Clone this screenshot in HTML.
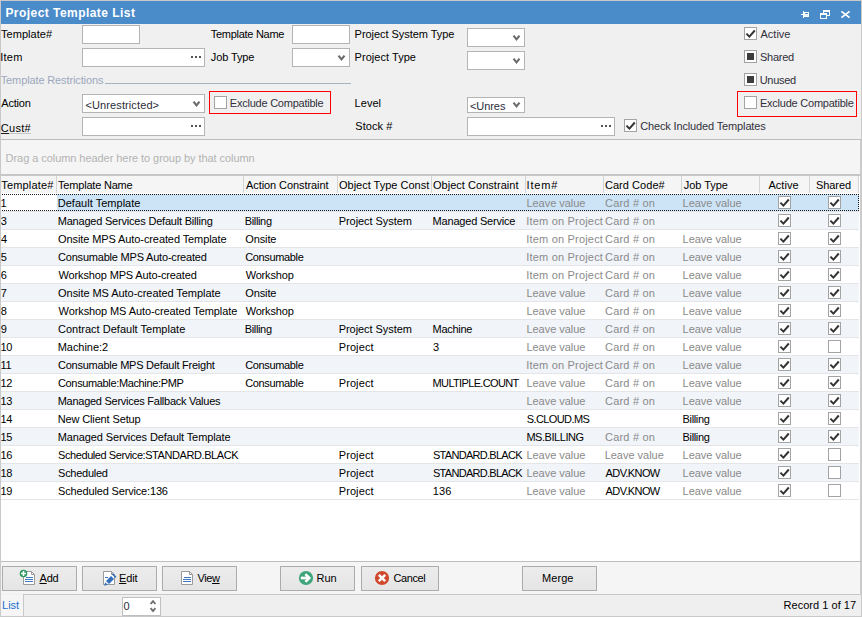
<!DOCTYPE html><html><head><meta charset="utf-8"><title>Project Template List</title><style>
html,body{margin:0;padding:0;}
body{width:862px;height:617px;position:relative;overflow:hidden;background:#f0f0f0;font-family:"Liberation Sans",sans-serif;}
.t{position:absolute;white-space:nowrap;font-family:"Liberation Sans",sans-serif;}
</style></head><body>

<div style="position:absolute;left:0px;top:0px;width:862px;height:1px;background:#c9c9c9"></div>
<div style="position:absolute;left:0px;top:0px;width:1px;height:617px;background:#c9c9c9"></div>
<div style="position:absolute;left:861px;top:0px;width:1px;height:617px;background:#c9c9c9"></div>
<div style="position:absolute;left:1px;top:1px;width:860px;height:23px;background:#4a8bca"></div>
<div class="t" style="left:5.40px;top:5.53px;color:#fff;font-size:12px;font-weight:bold;letter-spacing:0.453px;line-height:14px;">Project Template List</div>
<div style="position:absolute;left:801px;top:14px;width:2px;height:1px;background:#fff"></div>
<div style="position:absolute;left:803px;top:11px;width:1px;height:7px;background:#fff"></div>
<div style="position:absolute;left:804px;top:12px;width:5px;height:5px;background:#fff"></div>
<div style="position:absolute;left:805px;top:13px;width:3px;height:1px;background:#4a8bca"></div>
<div style="position:absolute;left:805px;top:15px;width:3px;height:1px;background:#dfeaf6"></div>
<div style="position:absolute;left:823px;top:10px;width:7px;height:6px;background:#fff"></div>
<div style="position:absolute;left:824px;top:12px;width:5px;height:3px;background:#4a8bca"></div>
<div style="position:absolute;left:820px;top:13px;width:7px;height:6px;background:#fff"></div>
<div style="position:absolute;left:821px;top:15px;width:5px;height:3px;background:#4a8bca"></div>
<svg style="position:absolute;left:839px;top:8px" width="14" height="14" viewBox="0 0 14 14" fill="none" stroke="#fff" stroke-width="1.8"><path d="M2.4 3.4 L10.6 9.6 M10.6 3.4 L2.4 9.6"/></svg>
<div class="t" style="left:1.06px;top:27.56px;color:#000000;font-size:11px;font-weight:normal;letter-spacing:0.030px;line-height:13px;">Template#</div>
<div class="t" style="left:0.29px;top:50.56px;color:#000000;font-size:11px;font-weight:normal;letter-spacing:0.214px;line-height:13px;">Item</div>
<div class="t" style="left:210.76px;top:27.86px;color:#000000;font-size:11px;font-weight:normal;letter-spacing:-0.276px;line-height:13px;">Template Name</div>
<div class="t" style="left:210.82px;top:50.86px;color:#000000;font-size:11px;font-weight:normal;letter-spacing:-0.111px;line-height:13px;">Job Type</div>
<div class="t" style="left:354.60px;top:27.86px;color:#000000;font-size:11px;font-weight:normal;letter-spacing:-0.044px;line-height:13px;">Project System Type</div>
<div class="t" style="left:354.60px;top:50.86px;color:#000000;font-size:11px;font-weight:normal;letter-spacing:0.041px;line-height:13px;">Project Type</div>
<div style="position:absolute;left:82px;top:25px;width:58px;height:19px;box-sizing:border-box;border:1px solid #b4b4b4;background:#fff"></div>
<div style="position:absolute;left:82px;top:48px;width:123px;height:19px;box-sizing:border-box;border:1px solid #b4b4b4;background:#fff"></div>
<div style="position:absolute;left:191px;top:56px;width:2px;height:2px;background:#555"></div>
<div style="position:absolute;left:195px;top:56px;width:2px;height:2px;background:#555"></div>
<div style="position:absolute;left:199px;top:56px;width:2px;height:2px;background:#555"></div>
<div style="position:absolute;left:292px;top:25px;width:58px;height:19px;box-sizing:border-box;border:1px solid #b4b4b4;background:#fff"></div>
<div style="position:absolute;left:292px;top:48px;width:58px;height:19px;box-sizing:border-box;border:1px solid #b4b4b4;background:#fff"></div>
<svg style="position:absolute;left:337px;top:54px" width="9" height="7" viewBox="0 0 9 7"><path d="M1.5 1.7 L4.5 5.3 L7.5 1.7" fill="none" stroke="#6a6a6a" stroke-width="2.1"/></svg>
<div style="position:absolute;left:467px;top:28px;width:58px;height:19px;box-sizing:border-box;border:1px solid #b4b4b4;background:#fff"></div>
<svg style="position:absolute;left:512px;top:34px" width="9" height="7" viewBox="0 0 9 7"><path d="M1.5 1.7 L4.5 5.3 L7.5 1.7" fill="none" stroke="#6a6a6a" stroke-width="2.1"/></svg>
<div style="position:absolute;left:467px;top:51px;width:58px;height:19px;box-sizing:border-box;border:1px solid #b4b4b4;background:#fff"></div>
<svg style="position:absolute;left:512px;top:57px" width="9" height="7" viewBox="0 0 9 7"><path d="M1.5 1.7 L4.5 5.3 L7.5 1.7" fill="none" stroke="#6a6a6a" stroke-width="2.1"/></svg>
<div class="t" style="left:0.76px;top:73.86px;color:#9ca8bd;font-size:11px;font-weight:normal;letter-spacing:-0.126px;line-height:13px;">Template Restrictions</div>
<div style="position:absolute;left:105px;top:83px;width:246px;height:1px;background:#a9b1ba"></div>
<div class="t" style="left:1.28px;top:96.86px;color:#000000;font-size:11px;font-weight:normal;letter-spacing:-0.186px;line-height:13px;">Action</div>
<div style="position:absolute;left:82px;top:94px;width:123px;height:19px;box-sizing:border-box;border:1px solid #b4b4b4;background:#fff"></div>
<svg style="position:absolute;left:192px;top:100px" width="9" height="7" viewBox="0 0 9 7"><path d="M1.5 1.7 L4.5 5.3 L7.5 1.7" fill="none" stroke="#6a6a6a" stroke-width="2.1"/></svg>
<div class="t" style="left:85.46px;top:98.66px;color:#2b2b3b;font-size:11px;font-weight:normal;letter-spacing:0.110px;line-height:13px;">&lt;Unrestricted&gt;</div>
<div class="t" style="left:0.74px;top:121.86px;color:#000000;font-size:11px;font-weight:normal;letter-spacing:0.296px;line-height:13px;">Cust#</div>
<div style="position:absolute;left:1px;top:133px;width:8px;height:1px;background:#1e1e1e"></div>
<div style="position:absolute;left:9px;top:133px;width:22px;height:1px;background:#c4c4c4"></div>
<div style="position:absolute;left:82px;top:117px;width:123px;height:19px;box-sizing:border-box;border:1px solid #b4b4b4;background:#fff"></div>
<div style="position:absolute;left:191px;top:125px;width:2px;height:2px;background:#555"></div>
<div style="position:absolute;left:195px;top:125px;width:2px;height:2px;background:#555"></div>
<div style="position:absolute;left:199px;top:125px;width:2px;height:2px;background:#555"></div>
<div style="position:absolute;left:209px;top:91px;width:122px;height:23px;box-sizing:border-box;border:1px solid #ff0000"></div>
<svg style="position:absolute;left:214px;top:96px" width="13" height="13" viewBox="0 0 13 13"><rect x="0.5" y="0.5" width="12" height="12" fill="#fff" stroke="#a3a3a3"/></svg>
<div class="t" style="left:229.80px;top:96.86px;color:#30303c;font-size:11px;font-weight:normal;letter-spacing:-0.232px;line-height:13px;">Exclude Compatible</div>
<div class="t" style="left:354.60px;top:96.86px;color:#000000;font-size:11px;font-weight:normal;letter-spacing:0.037px;line-height:13px;">Level</div>
<div class="t" style="left:355.29px;top:119.86px;color:#000000;font-size:11px;font-weight:normal;letter-spacing:0.063px;line-height:13px;">Stock #</div>
<div style="position:absolute;left:467px;top:97px;width:58px;height:16px;box-sizing:border-box;border:1px solid #b4b4b4;background:#fff"></div>
<svg style="position:absolute;left:512px;top:101px" width="9" height="7" viewBox="0 0 9 7"><path d="M1.5 1.7 L4.5 5.3 L7.5 1.7" fill="none" stroke="#6a6a6a" stroke-width="2.1"/></svg>
<div class="t" style="left:469.96px;top:99.66px;color:#2b2b3b;font-size:11px;font-weight:normal;letter-spacing:-0.065px;line-height:13px;">&lt;Unres</div>
<div style="position:absolute;left:467px;top:117px;width:148px;height:19px;box-sizing:border-box;border:1px solid #b4b4b4;background:#fff"></div>
<div style="position:absolute;left:601px;top:125px;width:2px;height:2px;background:#555"></div>
<div style="position:absolute;left:605px;top:125px;width:2px;height:2px;background:#555"></div>
<div style="position:absolute;left:609px;top:125px;width:2px;height:2px;background:#555"></div>
<svg style="position:absolute;left:624px;top:119px" width="13" height="13" viewBox="0 0 13 13"><rect x="0.5" y="0.5" width="12" height="12" fill="#fff" stroke="#a3a3a3"/><path d="M2.4 6.6 L5.4 9.6 L10.8 3.5" fill="none" stroke="#333" stroke-width="2"/></svg>
<div class="t" style="left:640.14px;top:119.86px;color:#30303c;font-size:11px;font-weight:normal;letter-spacing:-0.138px;line-height:13px;">Check Included Templates</div>
<svg style="position:absolute;left:744px;top:27px" width="13" height="13" viewBox="0 0 13 13"><rect x="0.5" y="0.5" width="12" height="12" fill="#fff" stroke="#a3a3a3"/><path d="M2.4 6.6 L5.4 9.6 L10.8 3.5" fill="none" stroke="#333" stroke-width="2"/></svg>
<div class="t" style="left:760.48px;top:27.86px;color:#30303c;font-size:11px;font-weight:normal;letter-spacing:0.011px;line-height:13px;">Active</div>
<svg style="position:absolute;left:744px;top:50px" width="13" height="13" viewBox="0 0 13 13"><rect x="0.5" y="0.5" width="12" height="12" fill="#fff" stroke="#a3a3a3"/><rect x="3" y="3" width="7" height="7" fill="#3c3c3c"/></svg>
<div class="t" style="left:759.99px;top:50.86px;color:#30303c;font-size:11px;font-weight:normal;letter-spacing:-0.251px;line-height:13px;">Shared</div>
<svg style="position:absolute;left:744px;top:73px" width="13" height="13" viewBox="0 0 13 13"><rect x="0.5" y="0.5" width="12" height="12" fill="#fff" stroke="#a3a3a3"/><rect x="3" y="3" width="7" height="7" fill="#3c3c3c"/></svg>
<div class="t" style="left:759.65px;top:73.86px;color:#30303c;font-size:11px;font-weight:normal;letter-spacing:-0.273px;line-height:13px;">Unused</div>
<div style="position:absolute;left:737px;top:91px;width:120px;height:26px;box-sizing:border-box;border:1px solid #ff0000"></div>
<svg style="position:absolute;left:744px;top:96px" width="13" height="13" viewBox="0 0 13 13"><rect x="0.5" y="0.5" width="12" height="12" fill="#fff" stroke="#a3a3a3"/></svg>
<div class="t" style="left:759.90px;top:96.86px;color:#30303c;font-size:11px;font-weight:normal;letter-spacing:-0.226px;line-height:13px;">Exclude Compatible</div>
<div style="position:absolute;left:1px;top:139px;width:860px;height:1px;background:#bcbcbc"></div>
<div style="position:absolute;left:1px;top:140px;width:859px;height:34px;background:#f5f5f5"></div>
<div class="t" style="left:5.60px;top:152.36px;color:#b3b3b3;font-size:11px;font-weight:normal;letter-spacing:-0.058px;line-height:13px;">Drag a column header here to group by that column</div>
<div style="position:absolute;left:1px;top:174px;width:859px;height:2px;background:#c6c6c6"></div>
<div style="position:absolute;left:1px;top:176px;width:859px;height:385px;background:#fff"></div>
<div style="position:absolute;left:860px;top:140px;width:1px;height:454px;background:#cdcdcd"></div>
<div style="position:absolute;left:1px;top:176px;width:858px;height:17px;background:#f5f5f5"></div>
<div style="position:absolute;left:56px;top:176px;width:1px;height:17px;background:#d4d4d4"></div>
<div style="position:absolute;left:243px;top:176px;width:1px;height:17px;background:#d4d4d4"></div>
<div style="position:absolute;left:337px;top:176px;width:1px;height:17px;background:#d4d4d4"></div>
<div style="position:absolute;left:431px;top:176px;width:1px;height:17px;background:#d4d4d4"></div>
<div style="position:absolute;left:525px;top:176px;width:1px;height:17px;background:#d4d4d4"></div>
<div style="position:absolute;left:603px;top:176px;width:1px;height:17px;background:#d4d4d4"></div>
<div style="position:absolute;left:681px;top:176px;width:1px;height:17px;background:#d4d4d4"></div>
<div style="position:absolute;left:759px;top:176px;width:1px;height:17px;background:#d4d4d4"></div>
<div style="position:absolute;left:809px;top:176px;width:1px;height:17px;background:#d4d4d4"></div>
<div style="position:absolute;left:858px;top:176px;width:1px;height:17px;background:#d4d4d4"></div>
<div style="position:absolute;left:1px;top:175px;width:55px;height:18px;overflow:hidden"><div class="t" style="left:0.26px;top:4.36px;color:#000000;font-size:11px;letter-spacing:0.168px;line-height:13px">Template#</div></div>
<div style="position:absolute;left:57px;top:175px;width:186px;height:18px;overflow:hidden"><div class="t" style="left:1.06px;top:4.36px;color:#000000;font-size:11px;letter-spacing:-0.201px;line-height:13px">Template Name</div></div>
<div style="position:absolute;left:244px;top:175px;width:93px;height:18px;overflow:hidden"><div class="t" style="left:1.98px;top:4.36px;color:#000000;font-size:11px;letter-spacing:-0.073px;line-height:13px">Action Constraint</div></div>
<div style="position:absolute;left:338px;top:175px;width:93px;height:18px;overflow:hidden"><div class="t" style="left:0.98px;top:4.36px;color:#000000;font-size:11px;letter-spacing:0.000px;line-height:13px">Object Type Const</div></div>
<div style="position:absolute;left:432px;top:175px;width:93px;height:18px;overflow:hidden"><div class="t" style="left:0.98px;top:4.36px;color:#000000;font-size:11px;letter-spacing:0.032px;line-height:13px">Object Constraint</div></div>
<div style="position:absolute;left:526px;top:175px;width:77px;height:18px;overflow:hidden"><div class="t" style="left:0.49px;top:4.36px;color:#000000;font-size:11px;letter-spacing:0.864px;line-height:13px">Item#</div></div>
<div style="position:absolute;left:604px;top:175px;width:77px;height:18px;overflow:hidden"><div class="t" style="left:0.94px;top:4.36px;color:#000000;font-size:11px;letter-spacing:0.045px;line-height:13px">Card Code#</div></div>
<div style="position:absolute;left:682px;top:175px;width:77px;height:18px;overflow:hidden"><div class="t" style="left:1.82px;top:4.36px;color:#000000;font-size:11px;letter-spacing:-0.040px;line-height:13px">Job Type</div></div>
<div class="t" style="left:768.48px;top:179.36px;color:#000000;font-size:11px;font-weight:normal;letter-spacing:0.031px;line-height:13px;">Active</div>
<div class="t" style="left:815.99px;top:179.36px;color:#000000;font-size:11px;font-weight:normal;letter-spacing:-0.071px;line-height:13px;">Shared</div>
<div style="position:absolute;left:1px;top:193px;width:858px;height:18px;background:#fff"></div>
<div style="position:absolute;left:57px;top:194px;width:802px;height:17px;background:#cde4f7"></div>
<div style="position:absolute;left:1px;top:211px;width:858px;height:1px;background:#e3e5e9"></div>
<div style="position:absolute;left:1px;top:194px;width:55px;height:17px;overflow:hidden"><div class="t" style="left:-0.64px;top:3.46px;color:#000000;font-size:11px;letter-spacing:-0.150px;line-height:13px">1</div></div>
<div style="position:absolute;left:57px;top:194px;width:186px;height:17px;overflow:hidden"><div class="t" style="left:0.70px;top:3.46px;color:#000000;font-size:11px;letter-spacing:0.029px;line-height:13px">Default Template</div></div>
<div style="position:absolute;left:526px;top:194px;width:77px;height:17px;overflow:hidden"><div class="t" style="left:0.40px;top:3.46px;color:#8a8a8a;font-size:11px;letter-spacing:-0.024px;line-height:13px">Leave value</div></div>
<div style="position:absolute;left:604px;top:194px;width:77px;height:17px;overflow:hidden"><div class="t" style="left:1.04px;top:3.46px;color:#8a8a8a;font-size:11px;letter-spacing:0.197px;line-height:13px">Card # on</div></div>
<div style="position:absolute;left:682px;top:194px;width:77px;height:17px;overflow:hidden"><div class="t" style="left:0.60px;top:3.46px;color:#8a8a8a;font-size:11px;letter-spacing:-0.024px;line-height:13px">Leave value</div></div>
<svg style="position:absolute;left:778px;top:196px" width="13" height="13" viewBox="0 0 13 13"><rect x="0.5" y="0.5" width="12" height="12" fill="#fff" stroke="#a3a3a3"/><path d="M2.4 6.6 L5.4 9.6 L10.8 3.5" fill="none" stroke="#333" stroke-width="2"/></svg>
<svg style="position:absolute;left:828px;top:196px" width="13" height="13" viewBox="0 0 13 13"><rect x="0.5" y="0.5" width="12" height="12" fill="#fff" stroke="#a3a3a3"/><path d="M2.4 6.6 L5.4 9.6 L10.8 3.5" fill="none" stroke="#333" stroke-width="2"/></svg>
<div style="position:absolute;left:1px;top:212px;width:858px;height:17px;background:#f1f4f9"></div>
<div style="position:absolute;left:1px;top:229px;width:858px;height:1px;background:#e3e5e9"></div>
<div style="position:absolute;left:1px;top:212px;width:55px;height:17px;overflow:hidden"><div class="t" style="left:-0.22px;top:3.46px;color:#000000;font-size:11px;letter-spacing:-0.150px;line-height:13px">3</div></div>
<div style="position:absolute;left:57px;top:212px;width:186px;height:17px;overflow:hidden"><div class="t" style="left:0.70px;top:3.46px;color:#000000;font-size:11px;letter-spacing:-0.203px;line-height:13px">Managed Services Default Billing</div></div>
<div style="position:absolute;left:244px;top:212px;width:93px;height:17px;overflow:hidden"><div class="t" style="left:0.80px;top:3.46px;color:#000000;font-size:11px;letter-spacing:-0.357px;line-height:13px">Billing</div></div>
<div style="position:absolute;left:338px;top:212px;width:93px;height:17px;overflow:hidden"><div class="t" style="left:0.70px;top:3.46px;color:#000000;font-size:11px;letter-spacing:-0.057px;line-height:13px">Project System</div></div>
<div style="position:absolute;left:432px;top:212px;width:93px;height:17px;overflow:hidden"><div class="t" style="left:0.60px;top:3.46px;color:#000000;font-size:11px;letter-spacing:-0.194px;line-height:13px">Managed Service</div></div>
<div style="position:absolute;left:526px;top:212px;width:77px;height:17px;overflow:hidden"><div class="t" style="left:0.29px;top:3.46px;color:#8a8a8a;font-size:11px;letter-spacing:0.187px;line-height:13px">Item on Project</div></div>
<div style="position:absolute;left:604px;top:212px;width:77px;height:17px;overflow:hidden"><div class="t" style="left:1.04px;top:3.46px;color:#8a8a8a;font-size:11px;letter-spacing:0.197px;line-height:13px">Card # on</div></div>
<svg style="position:absolute;left:778px;top:214px" width="13" height="13" viewBox="0 0 13 13"><rect x="0.5" y="0.5" width="12" height="12" fill="#fff" stroke="#a3a3a3"/><path d="M2.4 6.6 L5.4 9.6 L10.8 3.5" fill="none" stroke="#333" stroke-width="2"/></svg>
<svg style="position:absolute;left:828px;top:214px" width="13" height="13" viewBox="0 0 13 13"><rect x="0.5" y="0.5" width="12" height="12" fill="#fff" stroke="#a3a3a3"/><path d="M2.4 6.6 L5.4 9.6 L10.8 3.5" fill="none" stroke="#333" stroke-width="2"/></svg>
<div style="position:absolute;left:1px;top:247px;width:858px;height:1px;background:#e3e5e9"></div>
<div style="position:absolute;left:1px;top:230px;width:55px;height:17px;overflow:hidden"><div class="t" style="left:-0.05px;top:3.46px;color:#000000;font-size:11px;letter-spacing:-0.150px;line-height:13px">4</div></div>
<div style="position:absolute;left:57px;top:230px;width:186px;height:17px;overflow:hidden"><div class="t" style="left:1.08px;top:3.46px;color:#000000;font-size:11px;letter-spacing:-0.100px;line-height:13px">Onsite MPS Auto-created Template</div></div>
<div style="position:absolute;left:244px;top:230px;width:93px;height:17px;overflow:hidden"><div class="t" style="left:1.18px;top:3.46px;color:#000000;font-size:11px;letter-spacing:-0.098px;line-height:13px">Onsite</div></div>
<div style="position:absolute;left:526px;top:230px;width:77px;height:17px;overflow:hidden"><div class="t" style="left:0.29px;top:3.46px;color:#8a8a8a;font-size:11px;letter-spacing:0.187px;line-height:13px">Item on Project</div></div>
<div style="position:absolute;left:604px;top:230px;width:77px;height:17px;overflow:hidden"><div class="t" style="left:1.04px;top:3.46px;color:#8a8a8a;font-size:11px;letter-spacing:0.197px;line-height:13px">Card # on</div></div>
<div style="position:absolute;left:682px;top:230px;width:77px;height:17px;overflow:hidden"><div class="t" style="left:0.60px;top:3.46px;color:#8a8a8a;font-size:11px;letter-spacing:-0.024px;line-height:13px">Leave value</div></div>
<svg style="position:absolute;left:778px;top:232px" width="13" height="13" viewBox="0 0 13 13"><rect x="0.5" y="0.5" width="12" height="12" fill="#fff" stroke="#a3a3a3"/><path d="M2.4 6.6 L5.4 9.6 L10.8 3.5" fill="none" stroke="#333" stroke-width="2"/></svg>
<svg style="position:absolute;left:828px;top:232px" width="13" height="13" viewBox="0 0 13 13"><rect x="0.5" y="0.5" width="12" height="12" fill="#fff" stroke="#a3a3a3"/><path d="M2.4 6.6 L5.4 9.6 L10.8 3.5" fill="none" stroke="#333" stroke-width="2"/></svg>
<div style="position:absolute;left:1px;top:248px;width:858px;height:17px;background:#f1f4f9"></div>
<div style="position:absolute;left:1px;top:265px;width:858px;height:1px;background:#e3e5e9"></div>
<div style="position:absolute;left:1px;top:248px;width:55px;height:17px;overflow:hidden"><div class="t" style="left:-0.24px;top:3.46px;color:#000000;font-size:11px;letter-spacing:-0.150px;line-height:13px">5</div></div>
<div style="position:absolute;left:57px;top:248px;width:186px;height:17px;overflow:hidden"><div class="t" style="left:1.04px;top:3.46px;color:#000000;font-size:11px;letter-spacing:-0.204px;line-height:13px">Consumable MPS Auto-created</div></div>
<div style="position:absolute;left:244px;top:248px;width:93px;height:17px;overflow:hidden"><div class="t" style="left:1.14px;top:3.46px;color:#000000;font-size:11px;letter-spacing:-0.345px;line-height:13px">Consumable</div></div>
<div style="position:absolute;left:526px;top:248px;width:77px;height:17px;overflow:hidden"><div class="t" style="left:0.29px;top:3.46px;color:#8a8a8a;font-size:11px;letter-spacing:0.187px;line-height:13px">Item on Project</div></div>
<div style="position:absolute;left:604px;top:248px;width:77px;height:17px;overflow:hidden"><div class="t" style="left:1.04px;top:3.46px;color:#8a8a8a;font-size:11px;letter-spacing:0.197px;line-height:13px">Card # on</div></div>
<div style="position:absolute;left:682px;top:248px;width:77px;height:17px;overflow:hidden"><div class="t" style="left:0.60px;top:3.46px;color:#8a8a8a;font-size:11px;letter-spacing:-0.024px;line-height:13px">Leave value</div></div>
<svg style="position:absolute;left:778px;top:250px" width="13" height="13" viewBox="0 0 13 13"><rect x="0.5" y="0.5" width="12" height="12" fill="#fff" stroke="#a3a3a3"/><path d="M2.4 6.6 L5.4 9.6 L10.8 3.5" fill="none" stroke="#333" stroke-width="2"/></svg>
<svg style="position:absolute;left:828px;top:250px" width="13" height="13" viewBox="0 0 13 13"><rect x="0.5" y="0.5" width="12" height="12" fill="#fff" stroke="#a3a3a3"/><path d="M2.4 6.6 L5.4 9.6 L10.8 3.5" fill="none" stroke="#333" stroke-width="2"/></svg>
<div style="position:absolute;left:1px;top:283px;width:858px;height:1px;background:#e3e5e9"></div>
<div style="position:absolute;left:1px;top:266px;width:55px;height:17px;overflow:hidden"><div class="t" style="left:-0.36px;top:3.46px;color:#000000;font-size:11px;letter-spacing:-0.150px;line-height:13px">6</div></div>
<div style="position:absolute;left:57px;top:266px;width:186px;height:17px;overflow:hidden"><div class="t" style="left:1.55px;top:3.46px;color:#000000;font-size:11px;letter-spacing:-0.141px;line-height:13px">Workshop MPS Auto-created</div></div>
<div style="position:absolute;left:244px;top:266px;width:93px;height:17px;overflow:hidden"><div class="t" style="left:1.64px;top:3.46px;color:#000000;font-size:11px;letter-spacing:-0.171px;line-height:13px">Workshop</div></div>
<div style="position:absolute;left:526px;top:266px;width:77px;height:17px;overflow:hidden"><div class="t" style="left:0.29px;top:3.46px;color:#8a8a8a;font-size:11px;letter-spacing:0.187px;line-height:13px">Item on Project</div></div>
<div style="position:absolute;left:604px;top:266px;width:77px;height:17px;overflow:hidden"><div class="t" style="left:1.04px;top:3.46px;color:#8a8a8a;font-size:11px;letter-spacing:0.197px;line-height:13px">Card # on</div></div>
<div style="position:absolute;left:682px;top:266px;width:77px;height:17px;overflow:hidden"><div class="t" style="left:0.60px;top:3.46px;color:#8a8a8a;font-size:11px;letter-spacing:-0.024px;line-height:13px">Leave value</div></div>
<svg style="position:absolute;left:778px;top:268px" width="13" height="13" viewBox="0 0 13 13"><rect x="0.5" y="0.5" width="12" height="12" fill="#fff" stroke="#a3a3a3"/><path d="M2.4 6.6 L5.4 9.6 L10.8 3.5" fill="none" stroke="#333" stroke-width="2"/></svg>
<svg style="position:absolute;left:828px;top:268px" width="13" height="13" viewBox="0 0 13 13"><rect x="0.5" y="0.5" width="12" height="12" fill="#fff" stroke="#a3a3a3"/><path d="M2.4 6.6 L5.4 9.6 L10.8 3.5" fill="none" stroke="#333" stroke-width="2"/></svg>
<div style="position:absolute;left:1px;top:284px;width:858px;height:17px;background:#f1f4f9"></div>
<div style="position:absolute;left:1px;top:301px;width:858px;height:1px;background:#e3e5e9"></div>
<div style="position:absolute;left:1px;top:284px;width:55px;height:17px;overflow:hidden"><div class="t" style="left:-0.36px;top:3.46px;color:#000000;font-size:11px;letter-spacing:-0.150px;line-height:13px">7</div></div>
<div style="position:absolute;left:57px;top:284px;width:186px;height:17px;overflow:hidden"><div class="t" style="left:1.08px;top:3.46px;color:#000000;font-size:11px;letter-spacing:-0.059px;line-height:13px">Onsite MS Auto-created Template</div></div>
<div style="position:absolute;left:244px;top:284px;width:93px;height:17px;overflow:hidden"><div class="t" style="left:1.18px;top:3.46px;color:#000000;font-size:11px;letter-spacing:-0.098px;line-height:13px">Onsite</div></div>
<div style="position:absolute;left:526px;top:284px;width:77px;height:17px;overflow:hidden"><div class="t" style="left:0.40px;top:3.46px;color:#8a8a8a;font-size:11px;letter-spacing:-0.024px;line-height:13px">Leave value</div></div>
<div style="position:absolute;left:604px;top:284px;width:77px;height:17px;overflow:hidden"><div class="t" style="left:1.04px;top:3.46px;color:#8a8a8a;font-size:11px;letter-spacing:0.197px;line-height:13px">Card # on</div></div>
<div style="position:absolute;left:682px;top:284px;width:77px;height:17px;overflow:hidden"><div class="t" style="left:0.60px;top:3.46px;color:#8a8a8a;font-size:11px;letter-spacing:-0.024px;line-height:13px">Leave value</div></div>
<svg style="position:absolute;left:778px;top:286px" width="13" height="13" viewBox="0 0 13 13"><rect x="0.5" y="0.5" width="12" height="12" fill="#fff" stroke="#a3a3a3"/><path d="M2.4 6.6 L5.4 9.6 L10.8 3.5" fill="none" stroke="#333" stroke-width="2"/></svg>
<svg style="position:absolute;left:828px;top:286px" width="13" height="13" viewBox="0 0 13 13"><rect x="0.5" y="0.5" width="12" height="12" fill="#fff" stroke="#a3a3a3"/><path d="M2.4 6.6 L5.4 9.6 L10.8 3.5" fill="none" stroke="#333" stroke-width="2"/></svg>
<div style="position:absolute;left:1px;top:319px;width:858px;height:1px;background:#e3e5e9"></div>
<div style="position:absolute;left:1px;top:302px;width:55px;height:17px;overflow:hidden"><div class="t" style="left:-0.27px;top:3.46px;color:#000000;font-size:11px;letter-spacing:-0.150px;line-height:13px">8</div></div>
<div style="position:absolute;left:57px;top:302px;width:186px;height:17px;overflow:hidden"><div class="t" style="left:1.55px;top:3.46px;color:#000000;font-size:11px;letter-spacing:-0.096px;line-height:13px">Workshop MS Auto-created Template</div></div>
<div style="position:absolute;left:244px;top:302px;width:93px;height:17px;overflow:hidden"><div class="t" style="left:1.64px;top:3.46px;color:#000000;font-size:11px;letter-spacing:-0.171px;line-height:13px">Workshop</div></div>
<div style="position:absolute;left:526px;top:302px;width:77px;height:17px;overflow:hidden"><div class="t" style="left:0.40px;top:3.46px;color:#8a8a8a;font-size:11px;letter-spacing:-0.024px;line-height:13px">Leave value</div></div>
<div style="position:absolute;left:604px;top:302px;width:77px;height:17px;overflow:hidden"><div class="t" style="left:1.04px;top:3.46px;color:#8a8a8a;font-size:11px;letter-spacing:0.197px;line-height:13px">Card # on</div></div>
<div style="position:absolute;left:682px;top:302px;width:77px;height:17px;overflow:hidden"><div class="t" style="left:0.60px;top:3.46px;color:#8a8a8a;font-size:11px;letter-spacing:-0.024px;line-height:13px">Leave value</div></div>
<svg style="position:absolute;left:778px;top:304px" width="13" height="13" viewBox="0 0 13 13"><rect x="0.5" y="0.5" width="12" height="12" fill="#fff" stroke="#a3a3a3"/><path d="M2.4 6.6 L5.4 9.6 L10.8 3.5" fill="none" stroke="#333" stroke-width="2"/></svg>
<svg style="position:absolute;left:828px;top:304px" width="13" height="13" viewBox="0 0 13 13"><rect x="0.5" y="0.5" width="12" height="12" fill="#fff" stroke="#a3a3a3"/><path d="M2.4 6.6 L5.4 9.6 L10.8 3.5" fill="none" stroke="#333" stroke-width="2"/></svg>
<div style="position:absolute;left:1px;top:320px;width:858px;height:17px;background:#f1f4f9"></div>
<div style="position:absolute;left:1px;top:337px;width:858px;height:1px;background:#e3e5e9"></div>
<div style="position:absolute;left:1px;top:320px;width:55px;height:17px;overflow:hidden"><div class="t" style="left:-0.32px;top:3.46px;color:#000000;font-size:11px;letter-spacing:-0.150px;line-height:13px">9</div></div>
<div style="position:absolute;left:57px;top:320px;width:186px;height:17px;overflow:hidden"><div class="t" style="left:1.04px;top:3.46px;color:#000000;font-size:11px;letter-spacing:0.011px;line-height:13px">Contract Default Template</div></div>
<div style="position:absolute;left:244px;top:320px;width:93px;height:17px;overflow:hidden"><div class="t" style="left:0.80px;top:3.46px;color:#000000;font-size:11px;letter-spacing:-0.357px;line-height:13px">Billing</div></div>
<div style="position:absolute;left:338px;top:320px;width:93px;height:17px;overflow:hidden"><div class="t" style="left:0.70px;top:3.46px;color:#000000;font-size:11px;letter-spacing:-0.057px;line-height:13px">Project System</div></div>
<div style="position:absolute;left:432px;top:320px;width:93px;height:17px;overflow:hidden"><div class="t" style="left:0.60px;top:3.46px;color:#000000;font-size:11px;letter-spacing:-0.282px;line-height:13px">Machine</div></div>
<div style="position:absolute;left:526px;top:320px;width:77px;height:17px;overflow:hidden"><div class="t" style="left:0.40px;top:3.46px;color:#8a8a8a;font-size:11px;letter-spacing:-0.024px;line-height:13px">Leave value</div></div>
<div style="position:absolute;left:604px;top:320px;width:77px;height:17px;overflow:hidden"><div class="t" style="left:1.04px;top:3.46px;color:#8a8a8a;font-size:11px;letter-spacing:0.197px;line-height:13px">Card # on</div></div>
<div style="position:absolute;left:682px;top:320px;width:77px;height:17px;overflow:hidden"><div class="t" style="left:0.60px;top:3.46px;color:#8a8a8a;font-size:11px;letter-spacing:-0.024px;line-height:13px">Leave value</div></div>
<svg style="position:absolute;left:778px;top:322px" width="13" height="13" viewBox="0 0 13 13"><rect x="0.5" y="0.5" width="12" height="12" fill="#fff" stroke="#a3a3a3"/><path d="M2.4 6.6 L5.4 9.6 L10.8 3.5" fill="none" stroke="#333" stroke-width="2"/></svg>
<svg style="position:absolute;left:828px;top:322px" width="13" height="13" viewBox="0 0 13 13"><rect x="0.5" y="0.5" width="12" height="12" fill="#fff" stroke="#a3a3a3"/><path d="M2.4 6.6 L5.4 9.6 L10.8 3.5" fill="none" stroke="#333" stroke-width="2"/></svg>
<div style="position:absolute;left:1px;top:355px;width:858px;height:1px;background:#e3e5e9"></div>
<div style="position:absolute;left:1px;top:338px;width:55px;height:17px;overflow:hidden"><div class="t" style="left:-0.64px;top:3.46px;color:#000000;font-size:11px;letter-spacing:-0.150px;line-height:13px">10</div></div>
<div style="position:absolute;left:57px;top:338px;width:186px;height:17px;overflow:hidden"><div class="t" style="left:0.70px;top:3.46px;color:#000000;font-size:11px;letter-spacing:-0.038px;line-height:13px">Machine:2</div></div>
<div style="position:absolute;left:338px;top:338px;width:93px;height:17px;overflow:hidden"><div class="t" style="left:0.70px;top:3.46px;color:#000000;font-size:11px;letter-spacing:0.106px;line-height:13px">Project</div></div>
<div style="position:absolute;left:432px;top:338px;width:93px;height:17px;overflow:hidden"><div class="t" style="left:1.08px;top:3.46px;color:#000000;font-size:11px;letter-spacing:-0.150px;line-height:13px">3</div></div>
<div style="position:absolute;left:526px;top:338px;width:77px;height:17px;overflow:hidden"><div class="t" style="left:0.40px;top:3.46px;color:#8a8a8a;font-size:11px;letter-spacing:-0.024px;line-height:13px">Leave value</div></div>
<div style="position:absolute;left:604px;top:338px;width:77px;height:17px;overflow:hidden"><div class="t" style="left:1.04px;top:3.46px;color:#8a8a8a;font-size:11px;letter-spacing:0.197px;line-height:13px">Card # on</div></div>
<div style="position:absolute;left:682px;top:338px;width:77px;height:17px;overflow:hidden"><div class="t" style="left:0.60px;top:3.46px;color:#8a8a8a;font-size:11px;letter-spacing:-0.024px;line-height:13px">Leave value</div></div>
<svg style="position:absolute;left:778px;top:340px" width="13" height="13" viewBox="0 0 13 13"><rect x="0.5" y="0.5" width="12" height="12" fill="#fff" stroke="#a3a3a3"/><path d="M2.4 6.6 L5.4 9.6 L10.8 3.5" fill="none" stroke="#333" stroke-width="2"/></svg>
<svg style="position:absolute;left:828px;top:340px" width="13" height="13" viewBox="0 0 13 13"><rect x="0.5" y="0.5" width="12" height="12" fill="#fff" stroke="#a3a3a3"/></svg>
<div style="position:absolute;left:1px;top:356px;width:858px;height:17px;background:#f1f4f9"></div>
<div style="position:absolute;left:1px;top:373px;width:858px;height:1px;background:#e3e5e9"></div>
<div style="position:absolute;left:1px;top:356px;width:55px;height:17px;overflow:hidden"><div class="t" style="left:-0.64px;top:3.46px;color:#000000;font-size:11px;letter-spacing:-0.150px;line-height:13px">11</div></div>
<div style="position:absolute;left:57px;top:356px;width:186px;height:17px;overflow:hidden"><div class="t" style="left:1.04px;top:3.46px;color:#000000;font-size:11px;letter-spacing:-0.242px;line-height:13px">Consumable MPS Default Freight</div></div>
<div style="position:absolute;left:244px;top:356px;width:93px;height:17px;overflow:hidden"><div class="t" style="left:1.14px;top:3.46px;color:#000000;font-size:11px;letter-spacing:-0.345px;line-height:13px">Consumable</div></div>
<div style="position:absolute;left:526px;top:356px;width:77px;height:17px;overflow:hidden"><div class="t" style="left:0.29px;top:3.46px;color:#8a8a8a;font-size:11px;letter-spacing:0.187px;line-height:13px">Item on Project</div></div>
<div style="position:absolute;left:604px;top:356px;width:77px;height:17px;overflow:hidden"><div class="t" style="left:1.04px;top:3.46px;color:#8a8a8a;font-size:11px;letter-spacing:0.197px;line-height:13px">Card # on</div></div>
<div style="position:absolute;left:682px;top:356px;width:77px;height:17px;overflow:hidden"><div class="t" style="left:0.60px;top:3.46px;color:#8a8a8a;font-size:11px;letter-spacing:-0.024px;line-height:13px">Leave value</div></div>
<svg style="position:absolute;left:778px;top:358px" width="13" height="13" viewBox="0 0 13 13"><rect x="0.5" y="0.5" width="12" height="12" fill="#fff" stroke="#a3a3a3"/><path d="M2.4 6.6 L5.4 9.6 L10.8 3.5" fill="none" stroke="#333" stroke-width="2"/></svg>
<svg style="position:absolute;left:828px;top:358px" width="13" height="13" viewBox="0 0 13 13"><rect x="0.5" y="0.5" width="12" height="12" fill="#fff" stroke="#a3a3a3"/><path d="M2.4 6.6 L5.4 9.6 L10.8 3.5" fill="none" stroke="#333" stroke-width="2"/></svg>
<div style="position:absolute;left:1px;top:391px;width:858px;height:1px;background:#e3e5e9"></div>
<div style="position:absolute;left:1px;top:374px;width:55px;height:17px;overflow:hidden"><div class="t" style="left:-0.64px;top:3.46px;color:#000000;font-size:11px;letter-spacing:-0.150px;line-height:13px">12</div></div>
<div style="position:absolute;left:57px;top:374px;width:186px;height:17px;overflow:hidden"><div class="t" style="left:1.04px;top:3.46px;color:#000000;font-size:11px;letter-spacing:-0.359px;line-height:13px">Consumable:Machine:PMP</div></div>
<div style="position:absolute;left:244px;top:374px;width:93px;height:17px;overflow:hidden"><div class="t" style="left:1.14px;top:3.46px;color:#000000;font-size:11px;letter-spacing:-0.345px;line-height:13px">Consumable</div></div>
<div style="position:absolute;left:338px;top:374px;width:93px;height:17px;overflow:hidden"><div class="t" style="left:0.70px;top:3.46px;color:#000000;font-size:11px;letter-spacing:0.106px;line-height:13px">Project</div></div>
<div style="position:absolute;left:432px;top:374px;width:93px;height:17px;overflow:hidden"><div class="t" style="left:0.60px;top:3.46px;color:#000000;font-size:11px;letter-spacing:-0.653px;line-height:13px">MULTIPLE.COUNT</div></div>
<div style="position:absolute;left:526px;top:374px;width:77px;height:17px;overflow:hidden"><div class="t" style="left:0.40px;top:3.46px;color:#8a8a8a;font-size:11px;letter-spacing:-0.024px;line-height:13px">Leave value</div></div>
<div style="position:absolute;left:604px;top:374px;width:77px;height:17px;overflow:hidden"><div class="t" style="left:1.04px;top:3.46px;color:#8a8a8a;font-size:11px;letter-spacing:0.197px;line-height:13px">Card # on</div></div>
<div style="position:absolute;left:682px;top:374px;width:77px;height:17px;overflow:hidden"><div class="t" style="left:0.60px;top:3.46px;color:#8a8a8a;font-size:11px;letter-spacing:-0.024px;line-height:13px">Leave value</div></div>
<svg style="position:absolute;left:778px;top:376px" width="13" height="13" viewBox="0 0 13 13"><rect x="0.5" y="0.5" width="12" height="12" fill="#fff" stroke="#a3a3a3"/><path d="M2.4 6.6 L5.4 9.6 L10.8 3.5" fill="none" stroke="#333" stroke-width="2"/></svg>
<svg style="position:absolute;left:828px;top:376px" width="13" height="13" viewBox="0 0 13 13"><rect x="0.5" y="0.5" width="12" height="12" fill="#fff" stroke="#a3a3a3"/><path d="M2.4 6.6 L5.4 9.6 L10.8 3.5" fill="none" stroke="#333" stroke-width="2"/></svg>
<div style="position:absolute;left:1px;top:392px;width:858px;height:17px;background:#f1f4f9"></div>
<div style="position:absolute;left:1px;top:409px;width:858px;height:1px;background:#e3e5e9"></div>
<div style="position:absolute;left:1px;top:392px;width:55px;height:17px;overflow:hidden"><div class="t" style="left:-0.64px;top:3.46px;color:#000000;font-size:11px;letter-spacing:-0.150px;line-height:13px">13</div></div>
<div style="position:absolute;left:57px;top:392px;width:186px;height:17px;overflow:hidden"><div class="t" style="left:0.70px;top:3.46px;color:#000000;font-size:11px;letter-spacing:-0.264px;line-height:13px">Managed Services Fallback Values</div></div>
<div style="position:absolute;left:526px;top:392px;width:77px;height:17px;overflow:hidden"><div class="t" style="left:0.40px;top:3.46px;color:#8a8a8a;font-size:11px;letter-spacing:-0.024px;line-height:13px">Leave value</div></div>
<div style="position:absolute;left:604px;top:392px;width:77px;height:17px;overflow:hidden"><div class="t" style="left:1.04px;top:3.46px;color:#8a8a8a;font-size:11px;letter-spacing:0.197px;line-height:13px">Card # on</div></div>
<div style="position:absolute;left:682px;top:392px;width:77px;height:17px;overflow:hidden"><div class="t" style="left:0.60px;top:3.46px;color:#8a8a8a;font-size:11px;letter-spacing:-0.024px;line-height:13px">Leave value</div></div>
<svg style="position:absolute;left:778px;top:394px" width="13" height="13" viewBox="0 0 13 13"><rect x="0.5" y="0.5" width="12" height="12" fill="#fff" stroke="#a3a3a3"/><path d="M2.4 6.6 L5.4 9.6 L10.8 3.5" fill="none" stroke="#333" stroke-width="2"/></svg>
<svg style="position:absolute;left:828px;top:394px" width="13" height="13" viewBox="0 0 13 13"><rect x="0.5" y="0.5" width="12" height="12" fill="#fff" stroke="#a3a3a3"/><path d="M2.4 6.6 L5.4 9.6 L10.8 3.5" fill="none" stroke="#333" stroke-width="2"/></svg>
<div style="position:absolute;left:1px;top:427px;width:858px;height:1px;background:#e3e5e9"></div>
<div style="position:absolute;left:1px;top:410px;width:55px;height:17px;overflow:hidden"><div class="t" style="left:-0.64px;top:3.46px;color:#000000;font-size:11px;letter-spacing:-0.150px;line-height:13px">14</div></div>
<div style="position:absolute;left:57px;top:410px;width:186px;height:17px;overflow:hidden"><div class="t" style="left:0.70px;top:3.46px;color:#000000;font-size:11px;letter-spacing:-0.135px;line-height:13px">New Client Setup</div></div>
<div style="position:absolute;left:526px;top:410px;width:77px;height:17px;overflow:hidden"><div class="t" style="left:0.79px;top:3.46px;color:#000000;font-size:11px;letter-spacing:-0.605px;line-height:13px">S.CLOUD.MS</div></div>
<div style="position:absolute;left:682px;top:410px;width:77px;height:17px;overflow:hidden"><div class="t" style="left:0.60px;top:3.46px;color:#000000;font-size:11px;letter-spacing:-0.357px;line-height:13px">Billing</div></div>
<svg style="position:absolute;left:778px;top:412px" width="13" height="13" viewBox="0 0 13 13"><rect x="0.5" y="0.5" width="12" height="12" fill="#fff" stroke="#a3a3a3"/><path d="M2.4 6.6 L5.4 9.6 L10.8 3.5" fill="none" stroke="#333" stroke-width="2"/></svg>
<svg style="position:absolute;left:828px;top:412px" width="13" height="13" viewBox="0 0 13 13"><rect x="0.5" y="0.5" width="12" height="12" fill="#fff" stroke="#a3a3a3"/><path d="M2.4 6.6 L5.4 9.6 L10.8 3.5" fill="none" stroke="#333" stroke-width="2"/></svg>
<div style="position:absolute;left:1px;top:428px;width:858px;height:17px;background:#f1f4f9"></div>
<div style="position:absolute;left:1px;top:445px;width:858px;height:1px;background:#e3e5e9"></div>
<div style="position:absolute;left:1px;top:428px;width:55px;height:17px;overflow:hidden"><div class="t" style="left:-0.64px;top:3.46px;color:#000000;font-size:11px;letter-spacing:-0.150px;line-height:13px">15</div></div>
<div style="position:absolute;left:57px;top:428px;width:186px;height:17px;overflow:hidden"><div class="t" style="left:0.70px;top:3.46px;color:#000000;font-size:11px;letter-spacing:-0.113px;line-height:13px">Managed Services Default Template</div></div>
<div style="position:absolute;left:526px;top:428px;width:77px;height:17px;overflow:hidden"><div class="t" style="left:0.40px;top:3.46px;color:#000000;font-size:11px;letter-spacing:-0.446px;line-height:13px">MS.BILLING</div></div>
<div style="position:absolute;left:604px;top:428px;width:77px;height:17px;overflow:hidden"><div class="t" style="left:1.04px;top:3.46px;color:#8a8a8a;font-size:11px;letter-spacing:0.197px;line-height:13px">Card # on</div></div>
<div style="position:absolute;left:682px;top:428px;width:77px;height:17px;overflow:hidden"><div class="t" style="left:0.60px;top:3.46px;color:#000000;font-size:11px;letter-spacing:-0.357px;line-height:13px">Billing</div></div>
<svg style="position:absolute;left:778px;top:430px" width="13" height="13" viewBox="0 0 13 13"><rect x="0.5" y="0.5" width="12" height="12" fill="#fff" stroke="#a3a3a3"/><path d="M2.4 6.6 L5.4 9.6 L10.8 3.5" fill="none" stroke="#333" stroke-width="2"/></svg>
<svg style="position:absolute;left:828px;top:430px" width="13" height="13" viewBox="0 0 13 13"><rect x="0.5" y="0.5" width="12" height="12" fill="#fff" stroke="#a3a3a3"/><path d="M2.4 6.6 L5.4 9.6 L10.8 3.5" fill="none" stroke="#333" stroke-width="2"/></svg>
<div style="position:absolute;left:1px;top:463px;width:858px;height:1px;background:#e3e5e9"></div>
<div style="position:absolute;left:1px;top:446px;width:55px;height:17px;overflow:hidden"><div class="t" style="left:-0.64px;top:3.46px;color:#000000;font-size:11px;letter-spacing:-0.150px;line-height:13px">16</div></div>
<div style="position:absolute;left:57px;top:446px;width:186px;height:17px;overflow:hidden"><div class="t" style="left:1.09px;top:3.46px;color:#000000;font-size:11px;letter-spacing:-0.425px;line-height:13px">Scheduled Service:STANDARD.BLACK</div></div>
<div style="position:absolute;left:338px;top:446px;width:93px;height:17px;overflow:hidden"><div class="t" style="left:0.70px;top:3.46px;color:#000000;font-size:11px;letter-spacing:0.106px;line-height:13px">Project</div></div>
<div style="position:absolute;left:432px;top:446px;width:93px;height:17px;overflow:hidden"><div class="t" style="left:0.99px;top:3.46px;color:#000000;font-size:11px;letter-spacing:-0.713px;line-height:13px">STANDARD.BLACK</div></div>
<div style="position:absolute;left:526px;top:446px;width:77px;height:17px;overflow:hidden"><div class="t" style="left:0.40px;top:3.46px;color:#8a8a8a;font-size:11px;letter-spacing:-0.024px;line-height:13px">Leave value</div></div>
<div style="position:absolute;left:604px;top:446px;width:77px;height:17px;overflow:hidden"><div class="t" style="left:0.70px;top:3.46px;color:#8a8a8a;font-size:11px;letter-spacing:-0.024px;line-height:13px">Leave value</div></div>
<div style="position:absolute;left:682px;top:446px;width:77px;height:17px;overflow:hidden"><div class="t" style="left:0.60px;top:3.46px;color:#8a8a8a;font-size:11px;letter-spacing:-0.024px;line-height:13px">Leave value</div></div>
<svg style="position:absolute;left:778px;top:448px" width="13" height="13" viewBox="0 0 13 13"><rect x="0.5" y="0.5" width="12" height="12" fill="#fff" stroke="#a3a3a3"/><path d="M2.4 6.6 L5.4 9.6 L10.8 3.5" fill="none" stroke="#333" stroke-width="2"/></svg>
<svg style="position:absolute;left:828px;top:448px" width="13" height="13" viewBox="0 0 13 13"><rect x="0.5" y="0.5" width="12" height="12" fill="#fff" stroke="#a3a3a3"/></svg>
<div style="position:absolute;left:1px;top:464px;width:858px;height:17px;background:#f1f4f9"></div>
<div style="position:absolute;left:1px;top:481px;width:858px;height:1px;background:#e3e5e9"></div>
<div style="position:absolute;left:1px;top:464px;width:55px;height:17px;overflow:hidden"><div class="t" style="left:-0.64px;top:3.46px;color:#000000;font-size:11px;letter-spacing:-0.150px;line-height:13px">18</div></div>
<div style="position:absolute;left:57px;top:464px;width:186px;height:17px;overflow:hidden"><div class="t" style="left:1.09px;top:3.46px;color:#000000;font-size:11px;letter-spacing:-0.272px;line-height:13px">Scheduled</div></div>
<div style="position:absolute;left:338px;top:464px;width:93px;height:17px;overflow:hidden"><div class="t" style="left:0.70px;top:3.46px;color:#000000;font-size:11px;letter-spacing:0.106px;line-height:13px">Project</div></div>
<div style="position:absolute;left:432px;top:464px;width:93px;height:17px;overflow:hidden"><div class="t" style="left:0.99px;top:3.46px;color:#000000;font-size:11px;letter-spacing:-0.713px;line-height:13px">STANDARD.BLACK</div></div>
<div style="position:absolute;left:526px;top:464px;width:77px;height:17px;overflow:hidden"><div class="t" style="left:0.40px;top:3.46px;color:#8a8a8a;font-size:11px;letter-spacing:-0.024px;line-height:13px">Leave value</div></div>
<div style="position:absolute;left:604px;top:464px;width:77px;height:17px;overflow:hidden"><div class="t" style="left:1.58px;top:3.46px;color:#000000;font-size:11px;letter-spacing:-0.602px;line-height:13px">ADV.KNOW</div></div>
<div style="position:absolute;left:682px;top:464px;width:77px;height:17px;overflow:hidden"><div class="t" style="left:0.60px;top:3.46px;color:#8a8a8a;font-size:11px;letter-spacing:-0.024px;line-height:13px">Leave value</div></div>
<svg style="position:absolute;left:778px;top:466px" width="13" height="13" viewBox="0 0 13 13"><rect x="0.5" y="0.5" width="12" height="12" fill="#fff" stroke="#a3a3a3"/><path d="M2.4 6.6 L5.4 9.6 L10.8 3.5" fill="none" stroke="#333" stroke-width="2"/></svg>
<svg style="position:absolute;left:828px;top:466px" width="13" height="13" viewBox="0 0 13 13"><rect x="0.5" y="0.5" width="12" height="12" fill="#fff" stroke="#a3a3a3"/></svg>
<div style="position:absolute;left:1px;top:499px;width:858px;height:1px;background:#e3e5e9"></div>
<div style="position:absolute;left:1px;top:482px;width:55px;height:17px;overflow:hidden"><div class="t" style="left:-0.64px;top:3.46px;color:#000000;font-size:11px;letter-spacing:-0.150px;line-height:13px">19</div></div>
<div style="position:absolute;left:57px;top:482px;width:186px;height:17px;overflow:hidden"><div class="t" style="left:1.09px;top:3.46px;color:#000000;font-size:11px;letter-spacing:-0.162px;line-height:13px">Scheduled Service:136</div></div>
<div style="position:absolute;left:338px;top:482px;width:93px;height:17px;overflow:hidden"><div class="t" style="left:0.70px;top:3.46px;color:#000000;font-size:11px;letter-spacing:0.106px;line-height:13px">Project</div></div>
<div style="position:absolute;left:432px;top:482px;width:93px;height:17px;overflow:hidden"><div class="t" style="left:0.66px;top:3.46px;color:#000000;font-size:11px;letter-spacing:0.236px;line-height:13px">136</div></div>
<div style="position:absolute;left:526px;top:482px;width:77px;height:17px;overflow:hidden"><div class="t" style="left:0.40px;top:3.46px;color:#8a8a8a;font-size:11px;letter-spacing:-0.024px;line-height:13px">Leave value</div></div>
<div style="position:absolute;left:604px;top:482px;width:77px;height:17px;overflow:hidden"><div class="t" style="left:1.58px;top:3.46px;color:#000000;font-size:11px;letter-spacing:-0.602px;line-height:13px">ADV.KNOW</div></div>
<div style="position:absolute;left:682px;top:482px;width:77px;height:17px;overflow:hidden"><div class="t" style="left:0.60px;top:3.46px;color:#8a8a8a;font-size:11px;letter-spacing:-0.024px;line-height:13px">Leave value</div></div>
<svg style="position:absolute;left:778px;top:484px" width="13" height="13" viewBox="0 0 13 13"><rect x="0.5" y="0.5" width="12" height="12" fill="#fff" stroke="#a3a3a3"/><path d="M2.4 6.6 L5.4 9.6 L10.8 3.5" fill="none" stroke="#333" stroke-width="2"/></svg>
<svg style="position:absolute;left:828px;top:484px" width="13" height="13" viewBox="0 0 13 13"><rect x="0.5" y="0.5" width="12" height="12" fill="#fff" stroke="#a3a3a3"/></svg>
<div style="position:absolute;left:1px;top:194px;width:858px;height:1px;background:repeating-linear-gradient(90deg,transparent 0 1px,#1a1a1a 1px 2px)"></div>
<div style="position:absolute;left:1px;top:210px;width:858px;height:1px;background:repeating-linear-gradient(90deg,transparent 0 1px,#1a1a1a 1px 2px)"></div>
<div style="position:absolute;left:858px;top:194px;width:1px;height:17px;background:repeating-linear-gradient(180deg,#1a1a1a 0 1px,transparent 1px 2px)"></div>
<div style="position:absolute;left:1px;top:561px;width:860px;height:1px;background:#bdbdbd"></div>
<div style="position:absolute;left:1px;top:562px;width:859px;height:32px;background:#f5f5f5"></div>
<div style="position:absolute;left:2px;top:566px;width:75px;height:25px;box-sizing:border-box;border:1px solid #ababab;background:linear-gradient(#ececec,#e5e5e5)"></div>
<svg style="position:absolute;left:22px;top:570px" width="14" height="16" viewBox="0 0 14 16"><path d="M1.5 1.5 H9.5 L12.5 4.5 V14.5 H1.5 Z" fill="#fff" stroke="#9a9a9a"/><path d="M9.5 1.5 V4.5 H12.5" fill="none" stroke="#9a9a9a"/><path d="M4 7.5 H11 M3 9.5 H11 M3 11.5 H11" stroke="#3f78bf" stroke-width="1"/></svg><svg style="position:absolute;left:19px;top:569px" width="9" height="9" viewBox="0 0 9 9"><circle cx="4.5" cy="4.5" r="3.8" fill="#2e9a62"/><path d="M4.5 2 V7 M2 4.5 H7" stroke="#fff" stroke-width="1.6"/></svg>
<div class="t" style="left:39.48px;top:571.66px;color:#000000;font-size:11px;font-weight:normal;letter-spacing:-0.171px;line-height:13px;"><span style="text-decoration:underline">A</span>dd</div>
<div style="position:absolute;left:82px;top:566px;width:75px;height:25px;box-sizing:border-box;border:1px solid #ababab;background:linear-gradient(#ececec,#e5e5e5)"></div>
<svg style="position:absolute;left:102px;top:570px" width="16" height="16" viewBox="0 0 16 16"><path d="M1.5 1.5 H9.5 L12.5 4.5 V14.5 H1.5 Z" fill="#fff" stroke="#9a9a9a"/><path d="M9.5 1.5 V4.5 H12.5" fill="none" stroke="#9a9a9a"/><path d="M4 11 L9 6 L12 9 L7 14 Z" fill="#3570bd"/><path d="M3.2 12.3 L5.7 14.8 L2.2 15.8 Z" fill="#3570bd"/><path d="M10.3 3.8 L13.9 7.4" stroke="#3570bd" stroke-width="1.6"/><path d="M3 7.5 H6" stroke="#3570bd" stroke-width="1"/></svg>
<div class="t" style="left:119.10px;top:571.66px;color:#000000;font-size:11px;font-weight:normal;letter-spacing:-0.158px;line-height:13px;"><span style="text-decoration:underline">E</span>dit</div>
<div style="position:absolute;left:162px;top:566px;width:75px;height:25px;box-sizing:border-box;border:1px solid #ababab;background:linear-gradient(#ececec,#e5e5e5)"></div>
<svg style="position:absolute;left:180px;top:570px" width="14" height="16" viewBox="0 0 14 16"><path d="M1.5 1.5 H9.5 L12.5 4.5 V14.5 H1.5 Z" fill="#fff" stroke="#9a9a9a"/><path d="M9.5 1.5 V4.5 H12.5" fill="none" stroke="#9a9a9a"/><path d="M4 7.5 H11 M3 9.5 H11 M3 11.5 H11" stroke="#3f78bf" stroke-width="1"/></svg>
<div class="t" style="left:197.44px;top:571.66px;color:#000000;font-size:11px;font-weight:normal;letter-spacing:-0.369px;line-height:13px;">Vie<span style="text-decoration:underline">w</span></div>
<div style="position:absolute;left:280px;top:566px;width:75px;height:25px;box-sizing:border-box;border:1px solid #ababab;background:linear-gradient(#ececec,#e5e5e5)"></div>
<svg style="position:absolute;left:298px;top:570px" width="16" height="16" viewBox="0 0 16 16"><circle cx="8" cy="8" r="7.1" fill="#3ea57a"/><path d="M2.8 8 H10" stroke="#fff" stroke-width="2.7"/><path d="M7.4 4.2 L11.3 8 L7.4 11.8" fill="none" stroke="#fff" stroke-width="2.5"/></svg>
<div class="t" style="left:316.60px;top:571.66px;color:#000000;font-size:11px;font-weight:normal;letter-spacing:-0.028px;line-height:13px;">Run</div>
<div style="position:absolute;left:361px;top:566px;width:78px;height:25px;box-sizing:border-box;border:1px solid #ababab;background:linear-gradient(#ececec,#e5e5e5)"></div>
<svg style="position:absolute;left:374px;top:570px" width="16" height="16" viewBox="0 0 16 16"><circle cx="8" cy="8" r="7.1" fill="#cf4a2d"/><path d="M4.8 4.8 L11.2 11.2 M11.2 4.8 L4.8 11.2" fill="none" stroke="#fff" stroke-width="2.5"/></svg>
<div class="t" style="left:393.44px;top:571.66px;color:#000000;font-size:11px;font-weight:normal;letter-spacing:-0.389px;line-height:13px;">Cancel</div>
<div style="position:absolute;left:522px;top:566px;width:75px;height:25px;box-sizing:border-box;border:1px solid #ababab;background:linear-gradient(#ececec,#e5e5e5)"></div>

<div class="t" style="left:542.10px;top:571.66px;color:#000000;font-size:11px;font-weight:normal;letter-spacing:0.053px;line-height:13px;">Merge</div>
<div style="position:absolute;left:1px;top:595px;width:860px;height:22px;background:#f5f5f5"></div>
<div style="position:absolute;left:23px;top:594px;width:838px;height:22px;box-sizing:border-box;border-left:1px solid #c8c8c8;border-top:1px solid #c8c8c8;background:#efefef"></div>
<div style="position:absolute;left:0px;top:616px;width:862px;height:1px;background:#c9c9c9"></div>
<div class="t" style="left:2.00px;top:598.86px;color:#1a6fd0;font-size:11px;font-weight:normal;letter-spacing:0.021px;line-height:13px;">List</div>
<div style="position:absolute;left:122px;top:597px;width:39px;height:19px;box-sizing:border-box;border:1px solid #bfbfbf;background:#fff"></div>
<div class="t" style="left:123.60px;top:600.36px;color:#2b2b3b;font-size:11px;font-weight:normal;letter-spacing:0.000px;line-height:13px;">0</div>
<svg style="position:absolute;left:149px;top:599px" width="8" height="14" viewBox="0 0 8 14" fill="none" stroke="#6e6e6e" stroke-width="1.9"><path d="M1.6 5 L4 2.2 L6.4 5 M1.6 9.2 L4 12 L6.4 9.2"/></svg>
<div class="t" style="left:783.60px;top:599.36px;color:#000000;font-size:11px;font-weight:normal;letter-spacing:0.023px;line-height:13px;">Record 1 of 17</div>
</body></html>
